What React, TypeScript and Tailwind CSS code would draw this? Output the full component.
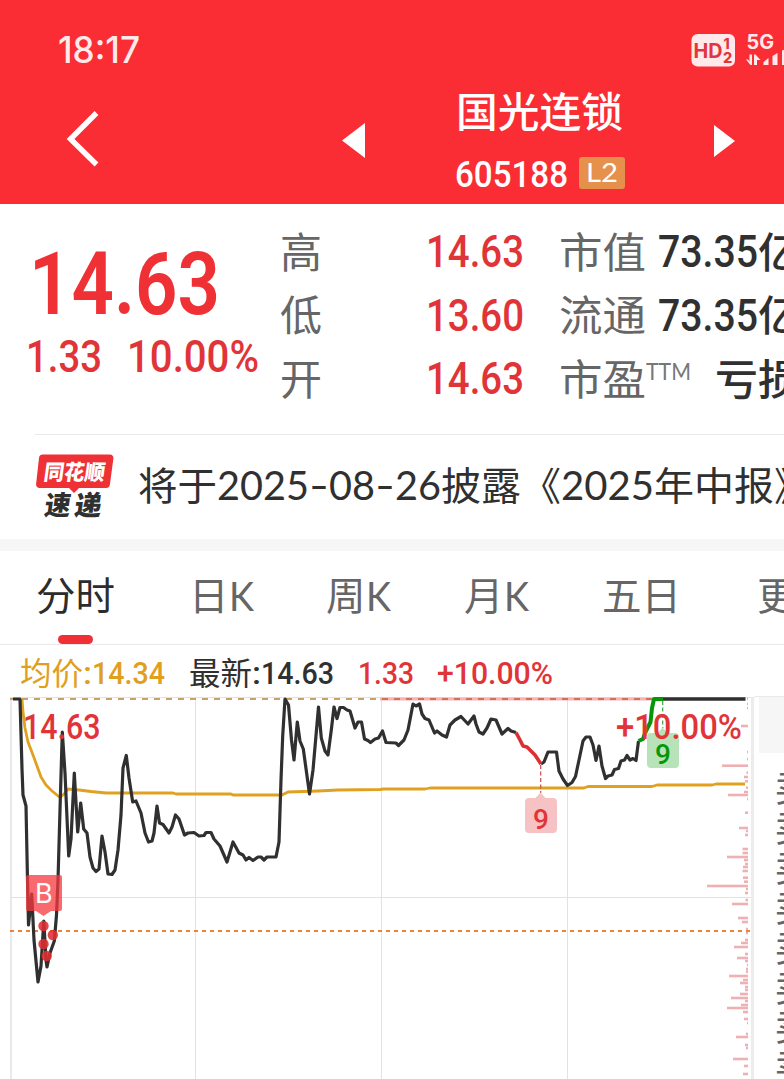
import { useLayoutEffect, useRef, type ReactNode } from 'react';

const CJK = "font-['Noto_Sans_CJK_SC',sans-serif]";
const NUM = "font-[Roboto,sans-serif]";
const LATO = "font-[Lato,sans-serif]";

// One line of text condensed or widened to an exact advance width.
function Fit({ w, className, children }: { w: number; className: string; children: ReactNode }) {
  const ref = useRef<HTMLSpanElement>(null);
  useLayoutEffect(() => {
    const el = ref.current;
    if (!el) return;
    el.style.transform = 'none';
    const natural = el.getBoundingClientRect().width;
    if (natural > 0) el.style.transform = `scaleX(${w / natural})`;
  }, [w]);
  return (
    <span className="block shrink-0" style={{ width: w }}>
      <span ref={ref} className={`block w-max origin-left whitespace-nowrap ${className}`}>
        {children}
      </span>
    </span>
  );
}

function Header() {
  return (
    <header className="h-[204px] bg-[#fa2d34] text-white">
      <div className="flex h-[91px] items-center pt-[9px] pl-[58px]">
        <Fit w={82} className="font-[Inter,sans-serif] text-[36.5px] leading-[40px] font-medium text-[#ffe9ea]">18:17</Fit>
        <svg className="ml-[551px] h-[34px] w-[93px] shrink-0" viewBox="691 32 93 34">
          <rect x="691.500" y="33" width="43.500" height="32.500" rx="6" fill="#ffe9ea" />
          <g fill="#e0373e" fontFamily="Inter, sans-serif" fontWeight="700">
            <text x="693.500" y="56.500" fontSize="20" textLength="29" lengthAdjust="spacingAndGlyphs">HD</text>
            <text x="723.500" y="48" fontSize="14" fontWeight="800">1</text>
            <text x="723" y="61.500" fontSize="14.500" fontWeight="800">2</text>
          </g>
          <text x="746.500" y="48" fontSize="19.500" fontWeight="700" fill="#ffe9ea" fontFamily="Inter, sans-serif" textLength="27.500" lengthAdjust="spacingAndGlyphs">5G</text>
          <path d="M746 58.500h2l1.500 2v-7h2.500v10.500h-1.500zM754 64v-10.500h1.500l5 5.500h-3.500v5zM763.500 64v-3l5-4v7zM772.500 64v-9l5-3v12zM782 64V49.500l3-1V64z" fill="#ffe9ea" />
        </svg>
      </div>
      <div className="flex h-[113px]">
        <svg className="mt-[18px] ml-[64px] h-[60px] w-[36px] shrink-0" viewBox="64 109 36 60">
          <path d="M96.500 113 70.500 139 96.500 164.500" fill="none" stroke="#fff" strokeWidth="5.400" />
        </svg>
        <svg className="mt-[30px] ml-[241px] h-[40px] w-[26px] shrink-0" viewBox="341 121 26 40">
          <path d="M342 140.500 365 123v35z" fill="#fff" />
        </svg>
        <div className="ml-[88px] w-[172px] shrink-0">
          <div className="-mt-[4px] flex h-[45px] items-center pl-[1px]">
            <Fit w={167} className={`${CJK} text-[41px] leading-[45px] font-medium`}>国光连锁</Fit>
          </div>
          <div className="mt-[25px] flex h-[32px] items-center">
            <Fit w={113} className={`${NUM} pt-[3px] text-[37px] leading-[32px] font-medium`}>605188</Fit>
            <div className="ml-[11px] flex h-[32px] w-[46px] items-center rounded-[3px] bg-[#e5914c] pl-[7px]">
              <Fit w={32} className={`${LATO} -mt-[2px] text-[27.500px] leading-[32px]`}>L2</Fit>
            </div>
          </div>
        </div>
        <svg className="mt-[30px] ml-[86px] h-[40px] w-[24px] shrink-0" viewBox="713 121 24 40">
          <path d="M714 125v32l21-16z" fill="#fff" />
        </svg>
      </div>
    </header>
  );
}

const ROW = 'flex h-[63.500px] items-center';
const LABEL = `${CJK} text-[42px] leading-[60px] text-[#666] -mt-[6px]`;
const RED_NUM = `${NUM} text-[43.5px] leading-[60px] font-medium text-[#e13438] pt-px`;
const DARK_NUM = `${NUM} text-[43.5px] leading-[60px] font-medium text-[#303030] pt-px`;
const DARK_CJK = `${CJK} text-[42px] leading-[60px] font-medium text-[#303030] -mt-[6px]`;

function Quote() {
  return (
    <section className="flex h-[230px]">
      <div className="w-[280px] shrink-0 pt-[43px]">
        <div className="flex pl-[29px]">
          <Fit w={191} className={`${NUM} text-[87px] leading-[74px] font-semibold text-[#ef3034]`}>14.63</Fit>
        </div>
        <div className="mt-[6px] flex pl-[26px]">
          <Fit w={76} className={`${NUM} text-[43.5px] leading-[62px] font-medium text-[#e13438]`}>1.33</Fit>
          <div className="w-[25px] shrink-0" />
          <Fit w={132} className={`${NUM} text-[43.5px] leading-[62px] font-medium text-[#e13438]`}>10.00%</Fit>
        </div>
      </div>
      <div className="w-[146px] shrink-0 pt-[17px]">
        <div className={ROW}><Fit w={42} className={LABEL}>高</Fit></div>
        <div className={ROW}><Fit w={42} className={LABEL}>低</Fit></div>
        <div className={ROW}><Fit w={42} className={LABEL}>开</Fit></div>
      </div>
      <div className="w-[133px] shrink-0 pt-[17px]">
        <div className={ROW}><Fit w={98} className={RED_NUM}>14.63</Fit></div>
        <div className={ROW}><Fit w={98} className={RED_NUM}>13.60</Fit></div>
        <div className={ROW}><Fit w={98} className={RED_NUM}>14.63</Fit></div>
      </div>
      <div className="w-[225px] shrink-0 overflow-hidden pt-[17px]">
        <div className={ROW}>
          <Fit w={87} className={LABEL}>市值</Fit>
          <div className="w-[12px] shrink-0" />
          <Fit w={100} className={DARK_NUM}>73.35</Fit>
          <Fit w={42} className={DARK_CJK}>亿</Fit>
        </div>
        <div className={ROW}>
          <Fit w={87} className={LABEL}>流通</Fit>
          <div className="w-[12px] shrink-0" />
          <Fit w={100} className={DARK_NUM}>73.35</Fit>
          <Fit w={42} className={DARK_CJK}>亿</Fit>
        </div>
        <div className={ROW}>
          <Fit w={87} className={LABEL}>市盈</Fit>
          <Fit w={45} className={`${LATO} -mt-[18px] text-[23px] leading-[30px] text-[#777]`}>TTM</Fit>
          <div className="w-[24px] shrink-0" />
          <Fit w={86} className={DARK_CJK}>亏损</Fit>
        </div>
      </div>
    </section>
  );
}

function News() {
  const cjk = `${CJK} text-[39px] leading-[56px] text-[#303030] -mt-[2px]`;
  const num = `${LATO} text-[41px] leading-[56px] text-[#303030]`;
  return (
    <section className="flex h-[105px] items-center overflow-hidden">
      <svg className="ml-[34px] h-[70px] w-[82px] shrink-0" viewBox="34 452 82 70">
        <path d="M42.500 454.500H110a3.500 3.500 0 0 1 3.400 4l-3.500 26a4 4 0 0 1-4 3.500H79l-5 5-5-5H39.500a3.500 3.500 0 0 1-3.400-4l2.900-26a4 4 0 0 1 3.500-3.500z" fill="#ef3034" />
        <g fontFamily="'Noto Sans CJK SC', sans-serif" fontWeight="900">
          <text transform="translate(43 480) skewX(-8)" fontSize="21.500" fill="#fff" textLength="61" lengthAdjust="spacingAndGlyphs">同花顺</text>
          <text transform="translate(43.500 515) skewX(-8)" fontSize="27" fill="#303030" textLength="26" lengthAdjust="spacingAndGlyphs">速</text>
          <text transform="translate(73.500 515) skewX(-8)" fontSize="27" fill="#303030" textLength="27" lengthAdjust="spacingAndGlyphs">递</text>
        </g>
      </svg>
      <div className="-mt-[4px] ml-[22px] flex">
        <Fit w={79} className={cjk}>将于</Fit>
        <Fit w={92} className={num}>2025</Fit>
        <Fit w={20} className={num}>-</Fit>
        <Fit w={46} className={num}>08</Fit>
        <Fit w={20} className={num}>-</Fit>
        <Fit w={46} className={num}>26</Fit>
        <Fit w={120} className={cjk}>披露《</Fit>
        <Fit w={93} className={num}>2025</Fit>
        <Fit w={160} className={cjk}>年中报》</Fit>
      </div>
    </section>
  );
}

function Tab({ cjk, k }: { cjk: string; k?: boolean }) {
  return (
    <div className="flex">
      <Fit w={cjk.length * 39.5} className={`${CJK} -mt-[2px] text-[39px] leading-[56px]`}>{cjk}</Fit>
      {k && <Fit w={25} className={`${LATO} pt-px text-[41px] leading-[56px]`}>K</Fit>}
    </div>
  );
}

function Tabs() {
  return (
    <nav className="flex h-[94px] overflow-hidden border-b border-[#e9e9e9] text-[#666]">
      <div className="flex w-[153px] shrink-0 flex-col pt-[16px] pl-[36px] text-[#2c2c2c]">
        <Tab cjk="分时" />
        <div className="mt-[14px] ml-[22px] h-[9px] w-[35px] shrink-0 rounded-full bg-[#ef3034]" />
      </div>
      <div className="w-[136px] shrink-0 pt-[16px] pl-[36px]"><Tab cjk="日" k /></div>
      <div className="w-[139px] shrink-0 pt-[16px] pl-[37px]"><Tab cjk="周" k /></div>
      <div className="w-[139px] shrink-0 pt-[16px] pl-[36px]"><Tab cjk="月" k /></div>
      <div className="w-[154px] shrink-0 pt-[16px] pl-[35px]"><Tab cjk="五日" /></div>
      <div className="shrink-0 pt-[16px] pl-[36px]"><Tab cjk="更多" /></div>
    </nav>
  );
}

function Summary() {
  const cjk = `${CJK} text-[31.5px] leading-[48px] -mt-[3px]`;
  const num = `${NUM} text-[32px] leading-[48px] font-medium`;
  return (
    <div className="flex h-[51px] items-center pt-[4px] pl-[20px] text-[#303030]">
      <div className="flex w-[169px] shrink-0 items-center text-[#e0a01e]">
        <Fit w={63} className={cjk}>均价</Fit>
        <Fit w={9} className={num}>:</Fit>
        <Fit w={73} className={num}>14.34</Fit>
      </div>
      <div className="flex w-[169px] shrink-0 items-center">
        <Fit w={63} className={cjk}>最新</Fit>
        <Fit w={9} className={num}>:</Fit>
        <Fit w={73} className={num}>14.63</Fit>
      </div>
      <div className="flex w-[79px] shrink-0 text-[#e13438]">
        <Fit w={56} className={num}>1.33</Fit>
      </div>
      <div className="text-[#e13438]"><Fit w={116} className={num}>+10.00%</Fit></div>
    </div>
  );
}

const PRICE_A =
  '13,699 20,699 22,769 23,795 26,806 27.500,880 28.500,925 31.700,894 34,940 38,982 41,966 43.800,921 46,960 47,967 50,953 54.300,941 56.500,915 58,880 60,810 62.300,732 65,773 68.700,856 71,839 74.300,773 77.700,832 80.700,803 83.700,829 87,833 90,857 93,868 96,871.500 99,869 102,836 105,852 108,874 112,874.500 115,870 118,850 121,815 123,768 126.300,755.500 129,778 132.700,802 136,801 141,813 145,833 148.500,842 152,841 154,833 157,806 159.500,823 163,824.500 169,833 172,827 175.500,815 179,819 184.500,835 188,833 194,832.500 199,836 204,835.500 206,832.500 211,832.500 214,839 220,846 227,862 233,842 239,853 243,855 246,860 249,857.500 253,860.500 258,857 261,857 264,860 267,857 276,857 279,842 281,780 282.700,736 285,699 288.500,705 291.500,740 294,760 297.300,722 300,741 303.300,749 309.500,794 313,770 318.500,707 321.300,738 325,751 328,755 331.300,730 334,707 337,718.500 340,707.500 343.500,707.500 347,710 350,711 355,728 358,722 361.500,722 364.500,739 368,740.500 370.500,742.500 375,739 378.500,738 382.500,731 386,742.500 396,743 398.500,745.500 404,740 408,730 413,704 416,706 419.500,704 422,714 425,718.500 429,720 434.500,733 437,731 442,735 446.500,737 450,725 455,720 461,716.500 468,724 474,716 476,724 479,732 483,734 487,728 491,719 496,720 502,734 508,728.500 511,731 516,732.500';
const PRICE_RED = '516,732.500 520,740 523,746 527,747 535,755 541,764';
const PRICE_B =
  '541,764 544,762 548,752 556.500,752 559,771 563,779 567.500,785.500 572,782.500 575.500,776.500 579,760 583,741 586,737 590,737 593,745 596,760.500 599,746 602,766 605.500,778.500 608,776 612,775 614.500,769.500 618.500,768.500 621,761 624.500,760 627,755.500 630,760 633,758.500 636,760.500 638.500,741';
const PRICE_GREEN = '638.500,741 643,739 646,731 650.500,722 652,708 654,699 663,699';
const AVERAGE =
  '22,699 23,712 25,728 28,742 33,755 37,766 41,777 46,785 52,791 60,797.500 64,794 68,789 79,790 91,791.500 106,793 173,793 176,794 231,794 233,795 282,795 288,792 318,791 338,790 380,789.500 384,789 425,789 430,788 584,788 588,786.500 652,786.500 657,785 712,785 716,784 745,784';

// [y, length] of the volume-by-price bars along the right edge.
const VOLUME: [number, number][] = [
  [699, 1], [704, 1], [708, 1], [726, 7], [752, 1], [759, 1], [765.7, 26], [772.7, 1.5], [777, 4], [781.3, 3], [787.7, 2],
  [792, 4], [795, 20], [799, 1], [812.7, 3], [828, 9], [831, 2], [835, 3], [849, 5.5], [853, 5.5], [857, 21], [860, 4],
  [864, 3], [867, 5], [871, 5.5], [877.7, 5], [881.7, 4], [886, 41], [889, 2], [893, 3], [900, 2.5], [904, 16],
  [918, 10], [922, 6], [929, 2], [933, 2], [940, 3], [943, 7], [947, 14], [954, 3], [958, 11], [961, 3], [965, 1],
  [969, 2], [971.7, 2], [976, 19], [980, 5], [983, 8], [987, 3], [990, 3], [994, 8], [998, 17], [1001, 3], [1005, 7],
  [1008, 21], [1012, 5], [1019, 4], [1023, 1], [1034, 2], [1037, 12], [1045, 3], [1048, 2], [1059, 15], [1066, 4], [1074, 5],
];

function Chart() {
  return (
    <svg className="block h-[383px] w-[755px] shrink-0" viewBox="0 696 755 383" fontFamily="Roboto, sans-serif" fontWeight="500">
      <g stroke="#e2e2e2" strokeWidth="1">
        <path d="M10 697.500H755M11 897.500H752M195.500 697V1079M381.500 697V1079M567.500 697V1079" />
        <path d="M11 697V1079" strokeWidth="1.500" />
      </g>
      <path d="M752.500 697V1079" stroke="#ececec" strokeWidth="3" />
      {VOLUME.map(([y, len]) => (
        <rect key={y} x={748 - len} y={y - 1.3} width={len} height="2.600" fill="#efb0b3" />
      ))}
      <path d="M380 699H655" stroke="#f4b3b6" strokeWidth="3" />
      <path d="M10 699H380" stroke="#c8a068" strokeWidth="1.800" strokeDasharray="6 6" />
      <path d="M380 699H655" stroke="#d0714f" strokeWidth="1.800" strokeDasharray="6 6" strokeDashoffset="10" />
      <path d="M10 931H750" stroke="#ee8433" strokeWidth="2" strokeDasharray="4 4" />
      <g fill="none" strokeLinejoin="round" strokeWidth="3.200">
        <polyline points={AVERAGE} stroke="#dfa11f" strokeWidth="2.800" />
        <polyline points={PRICE_A} stroke="#303030" />
        <polyline points={PRICE_B} stroke="#303030" />
        <polyline points={PRICE_RED} stroke="#dc2f33" strokeWidth="3.600" />
        <path d="M663 699H745.500" stroke="#303030" strokeWidth="3.600" />
        <polyline points={PRICE_GREEN} stroke="#069606" strokeWidth="4" />
      </g>

      <path d="M540.700 765V793" stroke="#c94a4d" strokeWidth="1.200" strokeDasharray="4 2.500" />
      <path d="M529 798h6.500l5-5.500 5 5.500h7.500a4 4 0 0 1 4 4v27a4 4 0 0 1-4 4h-24a4 4 0 0 1-4-4v-27a4 4 0 0 1 4-4z" fill="#f6c2c4" />
      <text x="541" y="829" fontSize="28" textAnchor="middle" fill="#e13438">9</text>

      <path d="M662.700 701V728" stroke="#3ea33e" strokeWidth="1.200" strokeDasharray="4 2.500" />
      <path d="M651 733h6.500l5-5.500 5 5.500h7.500a4 4 0 0 1 4 4v27a4 4 0 0 1-4 4h-24a4 4 0 0 1-4-4v-27a4 4 0 0 1 4-4z" fill="#b8e3b8" />
      <text x="663" y="764" fontSize="28" textAnchor="middle" fill="#069606">9</text>

      <path d="M28 875h32a2 2 0 0 1 2 2v32a2 2 0 0 1-2 2h-9l-7.500 5-7.500-5h-8a2 2 0 0 1-2-2v-32a2 2 0 0 1 2-2z" fill="#f5383d" fillOpacity=".75" />
      <text x="43.800" y="902.500" fontSize="27" fontWeight="400" fontFamily="Inter, sans-serif" textAnchor="middle" fill="#fff">B</text>
      <g fill="#e02d31" fillOpacity=".88">
        <circle cx="43.500" cy="926" r="5.200" />
        <circle cx="52.800" cy="935" r="5.200" />
        <circle cx="43.500" cy="944" r="5.200" />
        <circle cx="46.700" cy="956" r="5.200" />
      </g>
      <text x="23" y="739" fontSize="35" fill="#e13438" textLength="77.500" lengthAdjust="spacingAndGlyphs">14.63</text>
      <text x="616" y="739" fontSize="35" fill="#e13438" textLength="126" lengthAdjust="spacingAndGlyphs">+10.00%</text>
    </svg>
  );
}

const LEVELS = [10, 9, 8, 7, 6, 5, 4, 3];

function OrderBook() {
  return (
    <aside className="w-[29px] shrink-0 overflow-hidden border-t border-[#e9e9e9] pl-[4px]">
      <div className="h-[56px] bg-[#f6f6f6]" />
      <div className="pt-[12px] pl-[15.500px]">
        {LEVELS.map((n) => (
          <div key={n} className="flex h-[39.850px] items-center">
            <span className={`${CJK} text-[38px] leading-[39px] whitespace-nowrap text-[#666]`}>卖{n}</span>
          </div>
        ))}
      </div>
    </aside>
  );
}

export default function App() {
  return (
    <main className="h-[1079px] w-[784px] overflow-hidden bg-white">
      <Header />
      <Quote />
      <div className="-mb-px ml-[35px] h-px bg-[#e9e9e9]" />
      <News />
      <div className="h-[12px] bg-[#f6f6f6]" />
      <Tabs />
      <Summary />
      <div className="flex h-[383px] overflow-hidden">
        <Chart />
        <OrderBook />
      </div>
    </main>
  );
}
